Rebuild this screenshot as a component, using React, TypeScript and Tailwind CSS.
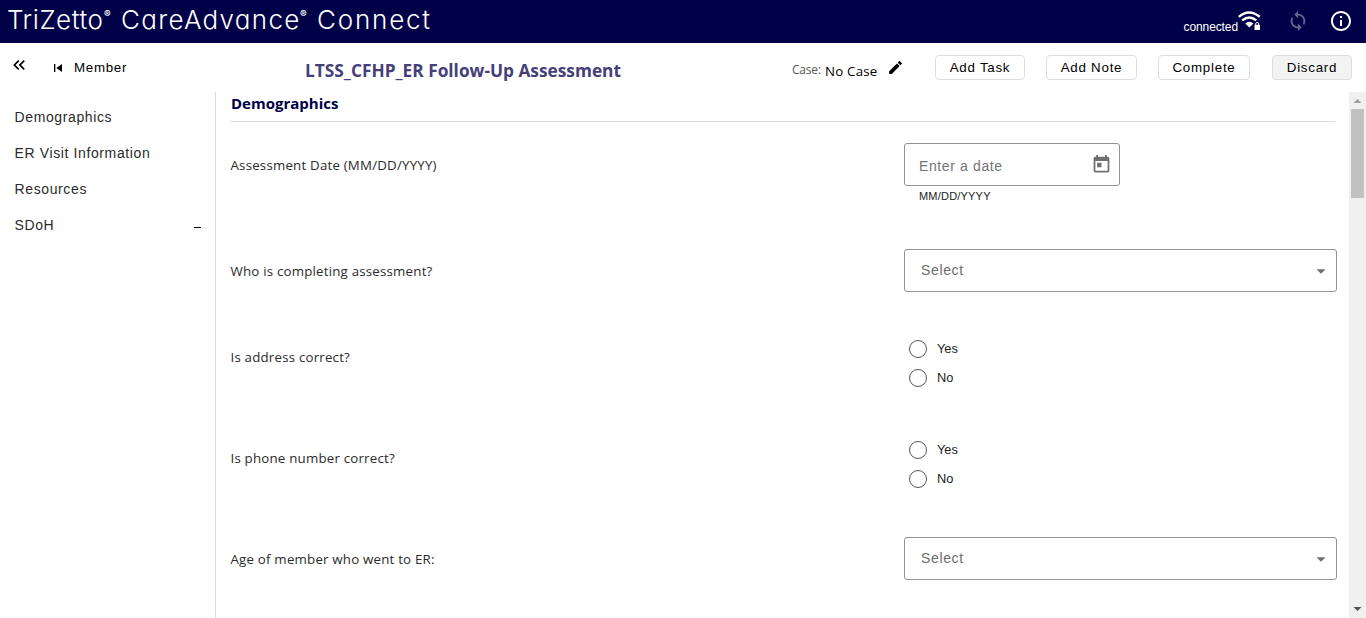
import type { ReactNode } from "react";
import { MdArrowDropDown, MdEdit, MdInfoOutline, MdKeyboardDoubleArrowLeft, MdLoop, MdSkipPrevious, MdToday } from "react-icons/md";

const sections = ["Demographics", "ER Visit Information", "Resources", "SDoH"];

function TopBar() {
  return (
    <header className="flex h-[43px] shrink-0 items-start bg-[#000048] text-white">
      <h1 className="flex h-[39px] items-center whitespace-nowrap pl-[7px] font-['Inter',sans-serif] text-[26px] font-light [font-feature-settings:'cv11']">
        <span className="w-[97px] tracking-[0.55px]">TriZetto</span>
        <sup className="-top-1.5 w-[17px] text-[10px] font-bold">®</sup>
        <span className="w-[179px] tracking-[1.3px]">CareAdvance</span>
        <sup className="-top-1.5 w-[17px] text-[10px] font-bold">®</sup>
        <span className="tracking-[1.8px]">Connect</span>
      </h1>
      <div className="ml-auto flex h-[43px] pr-[13px]">
        <span className="mt-[18px] text-[12px] leading-[18px] tracking-[-0.1px]">connected</span>
        <svg className="mt-[11px] h-5 w-[23px]" viewBox="0 0 23 20" fill="none" stroke="white" strokeWidth="2.4">
          <path d="M.8 5.8Q11 -3 21.8 5.8M4.2 9.4Q11.3 3.5 18.3 9.4" />
          <path d="M7.2 12.4Q11.3 9 15.4 12.4L11.3 16.4Z" fill="white" stroke="none" />
          <path d="M16.5 13.8h5.5v5.2h-5.5z" fill="white" stroke="none" />
          <path d="M17.7 14v-1.2q0-1.4 1.5-1.4t1.5 1.4V14" strokeWidth="1" />
        </svg>
        <MdLoop className="ml-[26px] mt-[10px] size-[22px] text-[#66668f]" />
        <MdInfoOutline className="ml-[20px] mt-[9px] size-[24px]" />
      </div>
    </header>
  );
}

function ActionButton({ children, className }: { children: ReactNode; className: string }) {
  return (
    <button className={`h-[25px] rounded-[4px] border border-[#dedede] text-[13.33px] leading-[23px] tracking-[0.75px] text-black ${className}`}>
      {children}
    </button>
  );
}

function Toolbar() {
  return (
    <div className="flex h-[49px] shrink-0 items-start">
      <MdKeyboardDoubleArrowLeft className="ml-[8.5px] mt-3 size-5 text-black" />
      <MdSkipPrevious className="ml-[21.5px] mt-[17px] size-4" />
      <span className="ml-[8px] mt-[15px] w-[231px] text-[13.33px] leading-5 tracking-[0.7px]">Member</span>
      <h2 className="mt-[16px] w-[487px] whitespace-nowrap font-['Open_Sans',sans-serif] text-[17.3px] font-bold leading-6 text-[#45407a]">
        LTSS_CFHP_ER Follow-Up Assessment
      </h2>
      <span className="mt-[17px] w-[33px] whitespace-nowrap font-['Open_Sans',sans-serif] text-[12px] leading-5 tracking-[-0.2px] text-[#555]">Case:</span>
      <span className="mt-[18px] w-[62px] whitespace-nowrap font-['Open_Sans',sans-serif] text-[13.3px] leading-5 tracking-[0.2px]">No Case</span>
      <MdEdit className="mt-[16px] size-[17px] text-black" />
      <div className="ml-auto mr-3.5 mt-3 flex">
        <ActionButton className="w-[90px]">Add Task</ActionButton>
        <ActionButton className="ml-[21px] w-[91px]">Add Note</ActionButton>
        <ActionButton className="ml-[21px] w-[92px]">Complete</ActionButton>
        <ActionButton className="ml-[22px] w-[80px] bg-[#f3f3f3]">Discard</ActionButton>
      </div>
    </div>
  );
}

function Question({ label, className, children }: { label: string; className: string; children: ReactNode }) {
  return (
    <div className={`flex shrink-0 ${className}`}>
      <div className="w-[674px] pl-[0.5px] pt-[33px] font-['Open_Sans',sans-serif] text-[13.3px] leading-5 tracking-[0.2px] text-[#2b2b2b]">{label}</div>
      <div className="flex-1">{children}</div>
    </div>
  );
}

function Select() {
  return (
    <div className="mt-[21px] flex h-[43px] w-[433px] items-center justify-between rounded-[3px] border border-[#949494] pl-4 pr-1 text-[14px] tracking-[0.65px] text-[#6d6d6d]">
      <span>Select</span>
      <MdArrowDropDown className="size-[22px] text-[#707070]" />
    </div>
  );
}

function YesNo() {
  return (
    <div className="flex flex-col gap-[11px] pl-[5px] pt-[26px]">
      {["Yes", "No"].map((o) => (
        <label key={o} className="flex h-[18px] items-center gap-2.5 text-[12.8px] text-[#222]">
          <span className="size-[18px] rounded-full border border-[#555]" />
          {o}
        </label>
      ))}
    </div>
  );
}

function Scrollbar() {
  return (
    <div className="flex w-[17px] shrink-0 flex-col items-center bg-[#f0f0f0]">
      <svg className="h-[17px] w-[17px]" viewBox="0 0 17 17"><path d="M4.5 11L8.5 7L12.5 11Z" fill="#a0a0a0" /></svg>
      <div className="h-[89px] w-[13px] bg-[#c1c1c1]" />
      <svg className="mt-auto h-[17px] w-[17px]" viewBox="0 0 17 17"><path d="M4.5 6L8.5 10L12.5 6Z" fill="#505050" /></svg>
    </div>
  );
}

export default function App() {
  return (
    <div className="flex h-[618px] w-[1366px] flex-col overflow-hidden bg-white font-['Liberation_Sans',Arial,sans-serif] text-black">
      <TopBar />
      <Toolbar />
      <div className="flex min-h-0 flex-1">
        <nav className="flex w-[216px] shrink-0 flex-col border-r border-[#dcdcdc] pl-[14.5px] pr-3.5 pt-[7px]">
          {sections.map((s) => (
            <a key={s} className="flex h-9 items-center justify-between text-[14px] tracking-[0.62px] text-[#2b2b2b]">
              {s}
              {s === "SDoH" && <span className="mt-1 h-px w-[7px] bg-black" />}
            </a>
          ))}
        </nav>
        <main className="flex min-w-0 flex-1 flex-col overflow-hidden pl-[14px]">
          <h3 className="mr-[14px] h-[30px] shrink-0 border-b border-[#dcdcdc] pl-[1px] font-['Open_Sans',sans-serif] text-[15px] font-bold leading-[23px] text-[#000048]">
            Demographics
          </h3>
          <Question label="Assessment Date (MM/DD/YYYY)" className="h-[106px]">
            <div className="mt-[21px] flex h-[43px] w-[216px] items-center justify-between rounded-[3px] border border-[#949494] pl-3.5 pr-[7px] text-[14px] tracking-[0.62px] text-[#757575]">
              <span className="pt-[3px]">Enter a date</span>
              <MdToday className="size-[21px] text-[#707070]" />
            </div>
            <div className="pl-[15px] pt-[2px] text-[11px] leading-4 tracking-[0.2px] text-[#222]">MM/DD/YYYY</div>
          </Question>
          <Question label="Who is completing assessment?" className="h-[86px]"><Select /></Question>
          <Question label="Is address correct?" className="h-[101px]"><YesNo /></Question>
          <Question label="Is phone number correct?" className="h-[101px]"><YesNo /></Question>
          <Question label="Age of member who went to ER:" className="h-[101px]"><Select /></Question>
        </main>
        <Scrollbar />
      </div>
    </div>
  );
}
